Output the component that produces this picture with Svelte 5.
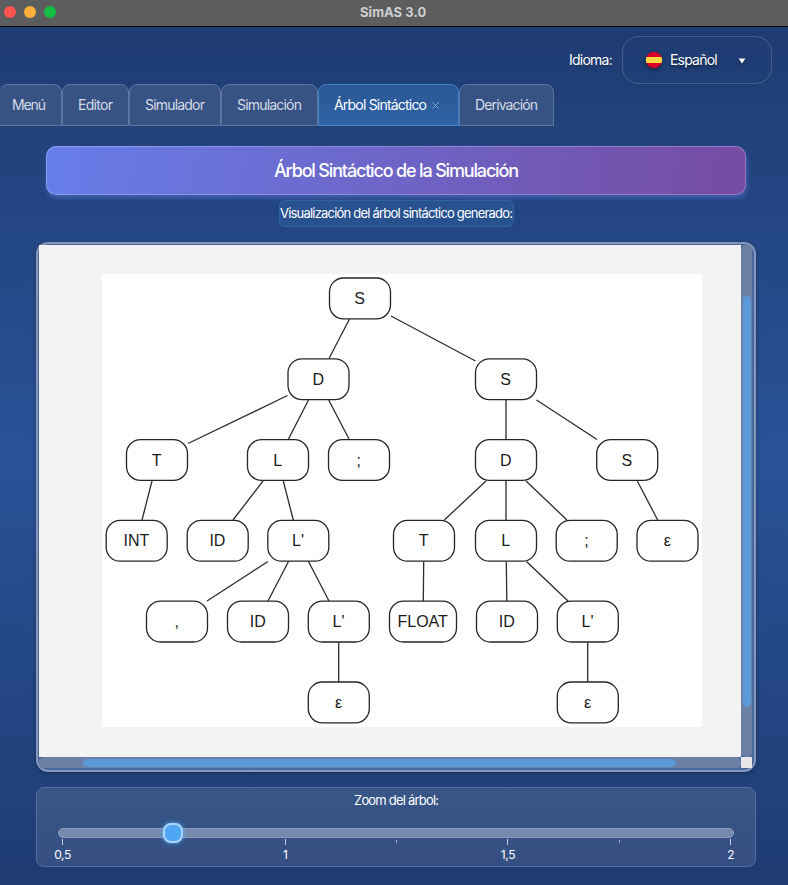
<script>
  const tabs = [
    { label: 'Menú', width: 62, text: 34 },
    { label: 'Editor', width: 67, text: 35 },
    { label: 'Simulador', width: 92, text: 60 },
    { label: 'Simulación', width: 97, text: 65 },
    { label: 'Árbol Sintáctico', width: 141, text: 93, active: true },
    { label: 'Derivación', width: 95, text: 63 }
  ];

  // Tree nodes: label, centre x, level, optional width
  const nodes = [
    ['S', 258, 0], ['D', 216.5, 1], ['S', 404, 1],
    ['T', 55, 2], ['L', 176, 2], [';', 257, 2], ['D', 404, 2], ['S', 525.2, 2],
    ['INT', 34.7, 3], ['ID', 115.7, 3], ["L'", 196.3, 3], ['T', 322, 3], ['L', 404, 3], [';', 484.7, 3], ['ε', 565.5, 3],
    [',', 75, 4], ['ID', 156, 4], ["L'", 236.8, 4], ['FLOAT', 321, 4, 67], ['ID', 405, 4], ["L'", 485.8, 4],
    ['ε', 236.8, 5], ['ε', 485.8, 5]
  ];

  const edges = [
    [247.5, 45, 227, 84.5], [289, 42, 373.5, 87],
    [185.5, 121.5, 86, 169.5], [206.5, 126, 186.5, 165], [226.7, 126, 247, 165],
    [404, 126, 404, 165], [434.5, 126, 495, 165.5],
    [50, 207, 40, 246], [161, 207, 131, 246], [181.3, 207, 191.3, 246],
    [384, 207, 342.3, 246], [404, 207, 404, 246], [424, 207, 465, 246], [535.3, 207, 555.7, 246],
    [166, 287.5, 105, 327], [186.5, 287.5, 166, 327], [206.5, 287.5, 227, 327],
    [321.7, 287.5, 321.3, 327], [404.3, 287.5, 404.8, 327], [424.5, 287.5, 466, 327],
    [236.7, 368.5, 236.7, 408], [485.7, 368.5, 485.7, 408]
  ];

  const top = (level) => 4 + level * 80.8;
  const ticks = [0, 2, 3, 4, 5, 6];
  const labels = { 0: '0,5', 2: '1', 4: '1,5', 6: '2' };
</script>

<div class="window">
  <header class="titlebar">
    <div class="lights"><i class="red"></i><i class="amber"></i><i class="green"></i></div>
    <span>SimAS 3.0</span>
  </header>

  <div class="toolbar">
    <span class="lang">Idioma:</span>
    <div class="combo">
      <svg class="flag" width="18" height="18" viewBox="0 0 18 18">
        <defs><clipPath id="disc"><circle cx="9" cy="9" r="8.2" /></clipPath></defs>
        <g clip-path="url(#disc)">
          <rect width="18" height="18" fill="#d80027" />
          <rect y="6" width="18" height="6" fill="#ffda44" />
        </g>
      </svg>
      <span class="chosen">Español</span>
      <svg class="arrow" width="8" height="6" viewBox="0 0 8 6"><path d="M.6.4h6.8L4 5.6z" fill="#fff" /></svg>
    </div>
  </div>

  <nav>
    {#each tabs as tab}
      <div class="tab" class:active={tab.active} style:width="{tab.width}px">
        <svg width={tab.text} height="20"><text x="0" y="15" textLength={tab.text}>{tab.label}</text></svg>
        {#if tab.active}
          <svg class="close" width="7" height="7" viewBox="0 0 7 7"><path d="M.5.5l6 6M6.5.5l-6 6" stroke="#86a9d3" stroke-width="1" /></svg>
        {/if}
      </div>
    {/each}
  </nav>

  <main>
    <h1><svg width="245" height="28"><text x="0" y="20" textLength="245">Árbol Sintáctico de la Simulación</text></svg></h1>
    <div class="subtitle"><svg width="233" height="20"><text x="0" y="14" textLength="233">Visualización del árbol sintáctico generado:</text></svg></div>

    <section class="scroll">
      <div class="view">
        <svg class="tree" width="600" height="453" viewBox="0 0 600 453">
          <rect width="600" height="453" fill="#fff" />
          {#each edges as [x1, y1, x2, y2]}
            <line {x1} {y1} {x2} {y2} />
          {/each}
          {#each nodes as [label, x, level, w = 61]}
            <rect class="node" x={x - w / 2} y={top(level)} width={w} height="40.8" rx="14" />
            <text x={x - 0.3} y={top(level) + 26}>{label}</text>
          {/each}
        </svg>
      </div>
      <div class="vbar"><div class="vthumb"></div></div>
      <div class="hbar"><div class="hthumb"></div></div>
      <div class="corner"></div>
    </section>

    <section class="zoom">
      <div class="zoomlabel"><svg width="85" height="18"><text x="0" y="13" textLength="85">Zoom del árbol:</text></svg></div>
      <div class="track"><div class="knob"></div></div>
      <div class="scale">
        {#each ticks as t}
          <div class="tick" class:minor={t % 2 === 1} style:left="{t * 111.35}px"><i></i><span>{labels[t] ?? ''}</span></div>
        {/each}
      </div>
    </section>
  </main>
</div>

<style>
  :global(body) { background: #1e3c72; }
  .window {
    width: 788px;
    height: 885px;
    overflow: hidden;
    box-sizing: border-box;
    display: flex;
    flex-direction: column;
    font-family: Inter, 'Liberation Sans', sans-serif;
    color: #fff;
    background: linear-gradient(to bottom, #1e3c72 27px, #2a5298 456px, #1e3c72 885px);
  }
  .window * { box-sizing: border-box; }
  svg { display: block; flex: none; overflow: visible; }
  svg text { fill: currentColor; }
  .titlebar {
    flex: none;
    display: flex;
    align-items: center;
    height: 27px;
    padding: 0 4px 2px;
    background: #5c5d5e;
    border-bottom: 1px solid #050505;
  }
  .titlebar span {
    margin-left: 304px;
    font-size: 13px;
    font-weight: 700;
    letter-spacing: .05px;
    color: #cfcfcf;
  }
  .lights { display: flex; gap: 8px; width: 52px; }
  .lights i { width: 12px; height: 12px; border-radius: 50%; }
  .red { background: #ff544f; }
  .amber { background: #ffb039; }
  .green { background: #13be42; }
  .toolbar {
    flex: none;
    display: flex;
    justify-content: flex-end;
    align-items: flex-end;
    gap: 10px;
    height: 57px;
    padding-right: 16px;
    font-size: 14px;
  }
  .lang { height: 48px; line-height: 47px; letter-spacing: -.75px; text-shadow: 0 1px 1px #0004; }
  .combo {
    display: flex;
    align-items: center;
    width: 150px;
    height: 48px;
    padding: 0 25px 0 22px;
    border: 1px solid #ffffff2b;
    border-radius: 16px;
  }
  .flag { filter: drop-shadow(0 2px 2px #0007); }
  .chosen { margin-left: 7px; margin-top: -1px; letter-spacing: -.8px; text-shadow: 0 2px 3px #0008; }
  .arrow { margin-left: auto; margin-top: 2px; filter: drop-shadow(0 2px 2px #0008); }
  nav { display: flex; height: 42px; flex: none; font-size: 14px; }
  .tab {
    display: flex;
    align-items: center;
    flex: none;
    padding: 0 0 0 15px;
    color: #d5dbe7;
    border: 1px solid #5d75a0;
    border-radius: 8px 8px 0 0;
    background: #375384;
  }
  .tab:first-child { padding-left: 12px; border-left: 0; }
  .tab.active { color: #fff; background: linear-gradient(#2b5795, #2f63a5); border-color: #3d83ca; }
  .close { margin: 1px 0 0 4.5px; }
  main { display: flex; flex-direction: column; align-items: center; padding: 20px 32px 0 36px; }
  h1 {
    display: flex;
    justify-content: center;
    align-items: center;
    width: 700px;
    height: 49px;
    margin: 0;
    padding-left: 1px;
    font-size: 18px;
    font-weight: 450;
    border: 1px solid #ffffff40;
    border-radius: 10px;
    background: linear-gradient(100deg, #667eea, #764ba2) border-box;
    box-shadow: 1px 3px 5px #667eea77;
  }
  .subtitle {
    display: flex;
    justify-content: center;
    align-items: center;
    width: 235px;
    height: 27px;
    margin: 5px 0 15px 1px;
    font-size: 13px;
    border: 1px solid #2e649f;
    border-radius: 6px;
    background: #285190;
  }
  .scroll {
    display: grid;
    grid-template: 512px 11px / 702px 11px;
    width: 720px;
    height: 530px;
    border: 2px solid #8497b9;
    border-radius: 12px;
    padding: 1px;
    background: #49689d;
    box-shadow: 0 2px 5px #0004;
  }
  .view { background: #f3f3f3; padding: 29px 0 0 63px; }
  .tree line { stroke: #2c2c2c; stroke-width: 1.3; }
  .tree .node { fill: #fff; stroke: #252525; stroke-width: 1.3; }
  .tree text { font: 16px 'Liberation Sans', Arial, sans-serif; fill: #1b1b1b; text-anchor: middle; }
  .vbar { padding: 51px 1px 0 2px; background: #6c7fa4; border-radius: 5px; }
  .vthumb { height: 411px; border-radius: 4px; background: #5a98d8; }
  .hbar { padding: 2px 0 1px 44px; background: #6c7fa4; border-radius: 5px; }
  .hthumb { width: 593px; height: 8px; border-radius: 4px; background: #5a98d8; }
  .corner { background: #e7e7e7; }
  .zoom {
    width: 720px;
    height: 80px;
    margin-top: 15px;
    padding: 4px 21px 0;
    border: 1px solid #566e9b;
    border-radius: 8px;
    background: linear-gradient(#385687, #354f82);
    font-size: 13px;
  }
  .zoomlabel { display: flex; justify-content: center; margin-bottom: 18px; height: 18px; padding-left: 1px; }
  .track {
    position: relative;
    width: 676px;
    height: 10px;
    border: 1px solid #8b9cba;
    border-radius: 5px;
    background: #758aac;
  }
  .knob {
    position: absolute;
    left: 104px;
    top: -6px;
    width: 20px;
    height: 20px;
    border: 2px solid #acd6ff;
    border-radius: 8px;
    background: #50a5f5;
    box-shadow: 0 0 4px #4facfe;
  }
  .scale { position: relative; margin: 1px 0 0 4.5px; height: 26px; }
  .tick { position: absolute; top: 0; width: 0; display: flex; flex-direction: column; align-items: center; }
  .tick i { flex: none; width: 1px; height: 6px; background: #c5cddb; }
  .tick span { margin-top: 2px; font: 12px/15px Inter, sans-serif; letter-spacing: -.4px; }
  .tick.minor i { height: 3px; margin-top: 1px; background: #a0aec6; }
</style>
